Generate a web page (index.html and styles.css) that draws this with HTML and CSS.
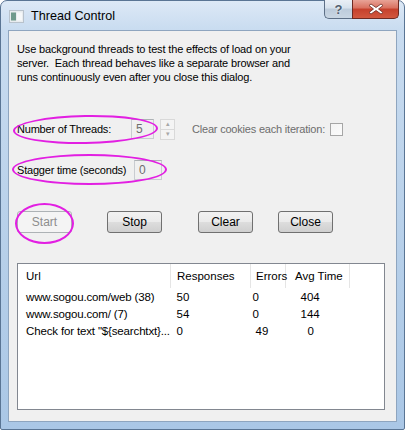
FILE: index.html
```html
<!DOCTYPE html>
<html lang="en">
<head>
    <meta charset="UTF-8">
    <title>Thread Control</title>
    <link rel="stylesheet" href="styles.css">
</head>
<body>
    <div class="window">
        <div class="titlebar">
            <svg class="app-icon" width="15" height="13" viewBox="0 0 15 13">
                <rect x="0.5" y="0.5" width="14" height="12" fill="#e8ecef" stroke="#b8c2cc"/>
                <rect x="2" y="2.5" width="5" height="8" fill="#6f9a8c"/>
                <rect x="8" y="2.5" width="5" height="8" fill="#f6f8f9"/>
            </svg>
            <span class="title">Thread Control</span>
            <div class="caption-buttons">
                <div class="cap help">?</div>
                <div class="cap close">
                    <svg width="16" height="12" viewBox="0 0 16 12">
                        <path d="M3 1 L8 4.5 L13 1 L15 2.5 L10.5 6 L15 9.5 L13 11 L8 7.5 L3 11 L1 9.5 L5.5 6 L1 2.5 Z" fill="#fff" stroke="#6b2a22" stroke-width="0.8"/>
                    </svg>
                </div>
            </div>
        </div>

        <div class="client">
            <p class="intro">Use background threads to test the effects of load on your<br>server.&nbsp; Each thread behaves like a separate browser and<br>runs continuously even after you close this dialog.</p>

            <div class="row threads">
                <span class="mark mark-threads"></span>
                <label class="lbl lbl-threads">Number of Threads:</label>
                <div class="field field-threads">5</div>
                <div class="spinner">
                    <span class="spin up">&#9652;</span>
                    <span class="spin down">&#9662;</span>
                </div>
                <label class="lbl muted">Clear cookies each iteration:</label>
                <span class="checkbox"></span>
            </div>

            <div class="row stagger">
                <span class="mark mark-stagger"></span>
                <label class="lbl lbl-stagger">Stagger time (seconds)</label>
                <div class="field field-stagger">0</div>
            </div>

            <div class="buttons">
                <button class="btn start" disabled>Start<span class="mark mark-start"></span></button>
                <button class="btn stop">Stop</button>
                <button class="btn clear">Clear</button>
                <button class="btn close-btn">Close</button>
            </div>

            <div class="listview">
                <table>
                    <thead>
                        <tr>
                            <th class="c-url">Url</th>
                            <th class="c-resp">Responses</th>
                            <th class="c-err">Errors</th>
                            <th class="c-avg">Avg Time</th>
                            <th class="c-fill"></th>
                        </tr>
                    </thead>
                    <tbody>
                        <tr>
                            <td class="c-url">www.sogou.com/web (38)</td>
                            <td class="c-resp">50</td>
                            <td class="c-err">0</td>
                            <td class="c-avg">404</td>
                            <td></td>
                        </tr>
                        <tr>
                            <td class="c-url">www.sogou.com/ (7)</td>
                            <td class="c-resp">54</td>
                            <td class="c-err">0</td>
                            <td class="c-avg">144</td>
                            <td></td>
                        </tr>
                        <tr>
                            <td class="c-url">Check for text "${searchtxt}...</td>
                            <td class="c-resp">0</td>
                            <td class="c-err e2">49</td>
                            <td class="c-avg a2">0</td>
                            <td></td>
                        </tr>
                    </tbody>
                </table>
            </div>
        </div>
    </div>
</body>
</html>
```

FILE: styles.css
```css
body {
    margin: 0;
    background: #fff;
    font-family: 'Liberation Sans', Arial, sans-serif;
    font-size: 11px;
    color: #000;
}

.window {
    width: 405px;
    height: 430px;
    box-sizing: border-box;
    border: 1px solid #5a7594;
    border-radius: 7px 7px 2px 2px;
    background: linear-gradient(180deg, #dde9f6 0%, #c9dcf0 28px, #b6cfe9 60%, #aac7e6 100%);
    padding: 0 7px 7px;
    display: flex;
    flex-direction: column;
}

/* title bar */
.titlebar {
    height: 29px;
    display: flex;
    align-items: center;
    position: relative;
}

.app-icon {
    margin: 1px 0 0 1px;
}

.title {
    margin-left: 7px;
    font-size: 12.6px;
    color: #000;
    padding-top: 1px;
}

.caption-buttons {
    position: absolute;
    top: -1px;
    right: -2px;
    display: flex;
}

.cap {
    height: 19px;
    box-sizing: border-box;
    border: 1px solid #5d6f86;
    border-top: none;
    display: flex;
    align-items: center;
    justify-content: center;
}

.help {
    width: 28px;
    border-radius: 0 0 0 5px;
    border-right: none;
    background: linear-gradient(180deg, #e9eff6 0%, #d6e1ec 45%, #bccbdb 50%, #c9d6e3 100%);
    color: #4f5e70;
    font-weight: bold;
    font-size: 13px;
    text-shadow: 0 0 2px #fff;
}

.close {
    width: 47px;
    border-radius: 0 0 5px 0;
    border-color: #6e2a22;
    background: linear-gradient(180deg, #e8a397 0%, #d9705f 45%, #c5402c 50%, #d2583f 100%);
}

/* client area */
.client {
    flex: 1;
    background: #f0f0f0;
    border: 1px solid #8ea5bf;
    padding: 0 11px 0 8px;
}

.intro {
    margin: 11px 0 0;
    line-height: 14px;
    letter-spacing: -0.15px;
}

.row {
    display: flex;
    align-items: center;
    height: 20px;
    position: relative;
}

.threads {
    margin-top: 35px;
}

.stagger {
    margin-top: 21px;
}

.lbl {
    letter-spacing: -0.2px;
}

.lbl-threads {
    width: 114px;
}

.lbl-stagger {
    width: 117px;
}

.muted {
    color: #6d6d6d;
    margin-left: 17px;
}

.field {
    height: 20px;
    box-sizing: border-box;
    border: 1px solid #c9ccd1;
    border-top-color: #adb2b5;
    background: #f0f0f0;
    color: #6d6d6d;
    font-size: 12px;
    line-height: 18px;
    padding-left: 4px;
}

.field-threads {
    width: 23px;
}

.field-stagger {
    width: 28px;
}

.spinner {
    margin-left: 6px;
    width: 15px;
    height: 21px;
    display: flex;
    flex-direction: column;
}

.spin {
    flex: 1;
    border: 1px solid #d9d9d9;
    background: #f4f4f4;
    color: #a8a8a8;
    font-size: 7px;
    line-height: 8px;
    text-align: center;
}

.spin.down {
    border-top: none;
}

.checkbox {
    width: 13px;
    height: 13px;
    box-sizing: border-box;
    border: 1px solid #a6a6a6;
    background: linear-gradient(135deg, #f4f4f4, #fbfbfb);
    margin-left: 5px;
}

/* buttons */
.buttons {
    display: flex;
    margin-top: 31px;
}

.btn {
    position: relative;
    width: 55px;
    height: 22px;
    border: 1px solid #707070;
    border-radius: 3px;
    background: linear-gradient(180deg, #f2f2f2 0%, #ebebeb 48%, #dddddd 52%, #cfcfcf 100%);
    font-family: inherit;
    font-size: 12px;
    color: #000;
    padding: 0;
}

.btn.start {
    border-color: #adb2b5;
    background: #f4f4f4;
    color: #8d8d8d;
}

.btn.stop {
    margin-left: 35px;
}

.btn.clear {
    margin-left: 36px;
}

.btn.close-btn {
    margin-left: 25px;
}

/* highlight marks drawn over the dialog */
.mark {
    position: absolute;
    border: 2.5px solid #e21fe2;
    border-radius: 50%;
    box-sizing: border-box;
}

.mark-threads {
    left: -4px;
    top: -4px;
    width: 145px;
    height: 29px;
    transform: rotate(-1deg);
}

.mark-stagger {
    left: -5px;
    top: -6px;
    width: 155px;
    height: 31px;
}

.mark-start {
    left: -3px;
    top: -9px;
    width: 59px;
    height: 41px;
}

/* list view */
.listview {
    margin-top: 30px;
    height: 147px;
    box-sizing: border-box;
    border: 1px solid #828790;
    background: #fff;
    width: 368px;
}

table {
    border-collapse: collapse;
    width: 100%;
    table-layout: fixed;
}

th {
    height: 24px;
    font-weight: normal;
    text-align: left;
    font-size: 11.5px;
    padding: 0;
    border-right: 1px solid #e5e5e5;
}

th.c-fill {
    border-right: none;
}

td {
    height: 17px;
    padding: 0;
    font-size: 11.5px;
    white-space: nowrap;
}

td.c-url {
    letter-spacing: -0.15px;
}

.c-url {
    width: 144px;
    padding-left: 8px;
}

.c-resp {
    width: 73px;
    padding-left: 6px;
}

.c-err {
    width: 29px;
    padding-left: 5px;
}

td.c-err {
    padding-left: 2px;
}

td.e2 {
    padding-left: 5px;
}

.c-avg {
    width: 54px;
    padding-left: 9px;
}

td.c-avg {
    padding-left: 15px;
}

td.a2 {
    padding-left: 22px;
}
```
